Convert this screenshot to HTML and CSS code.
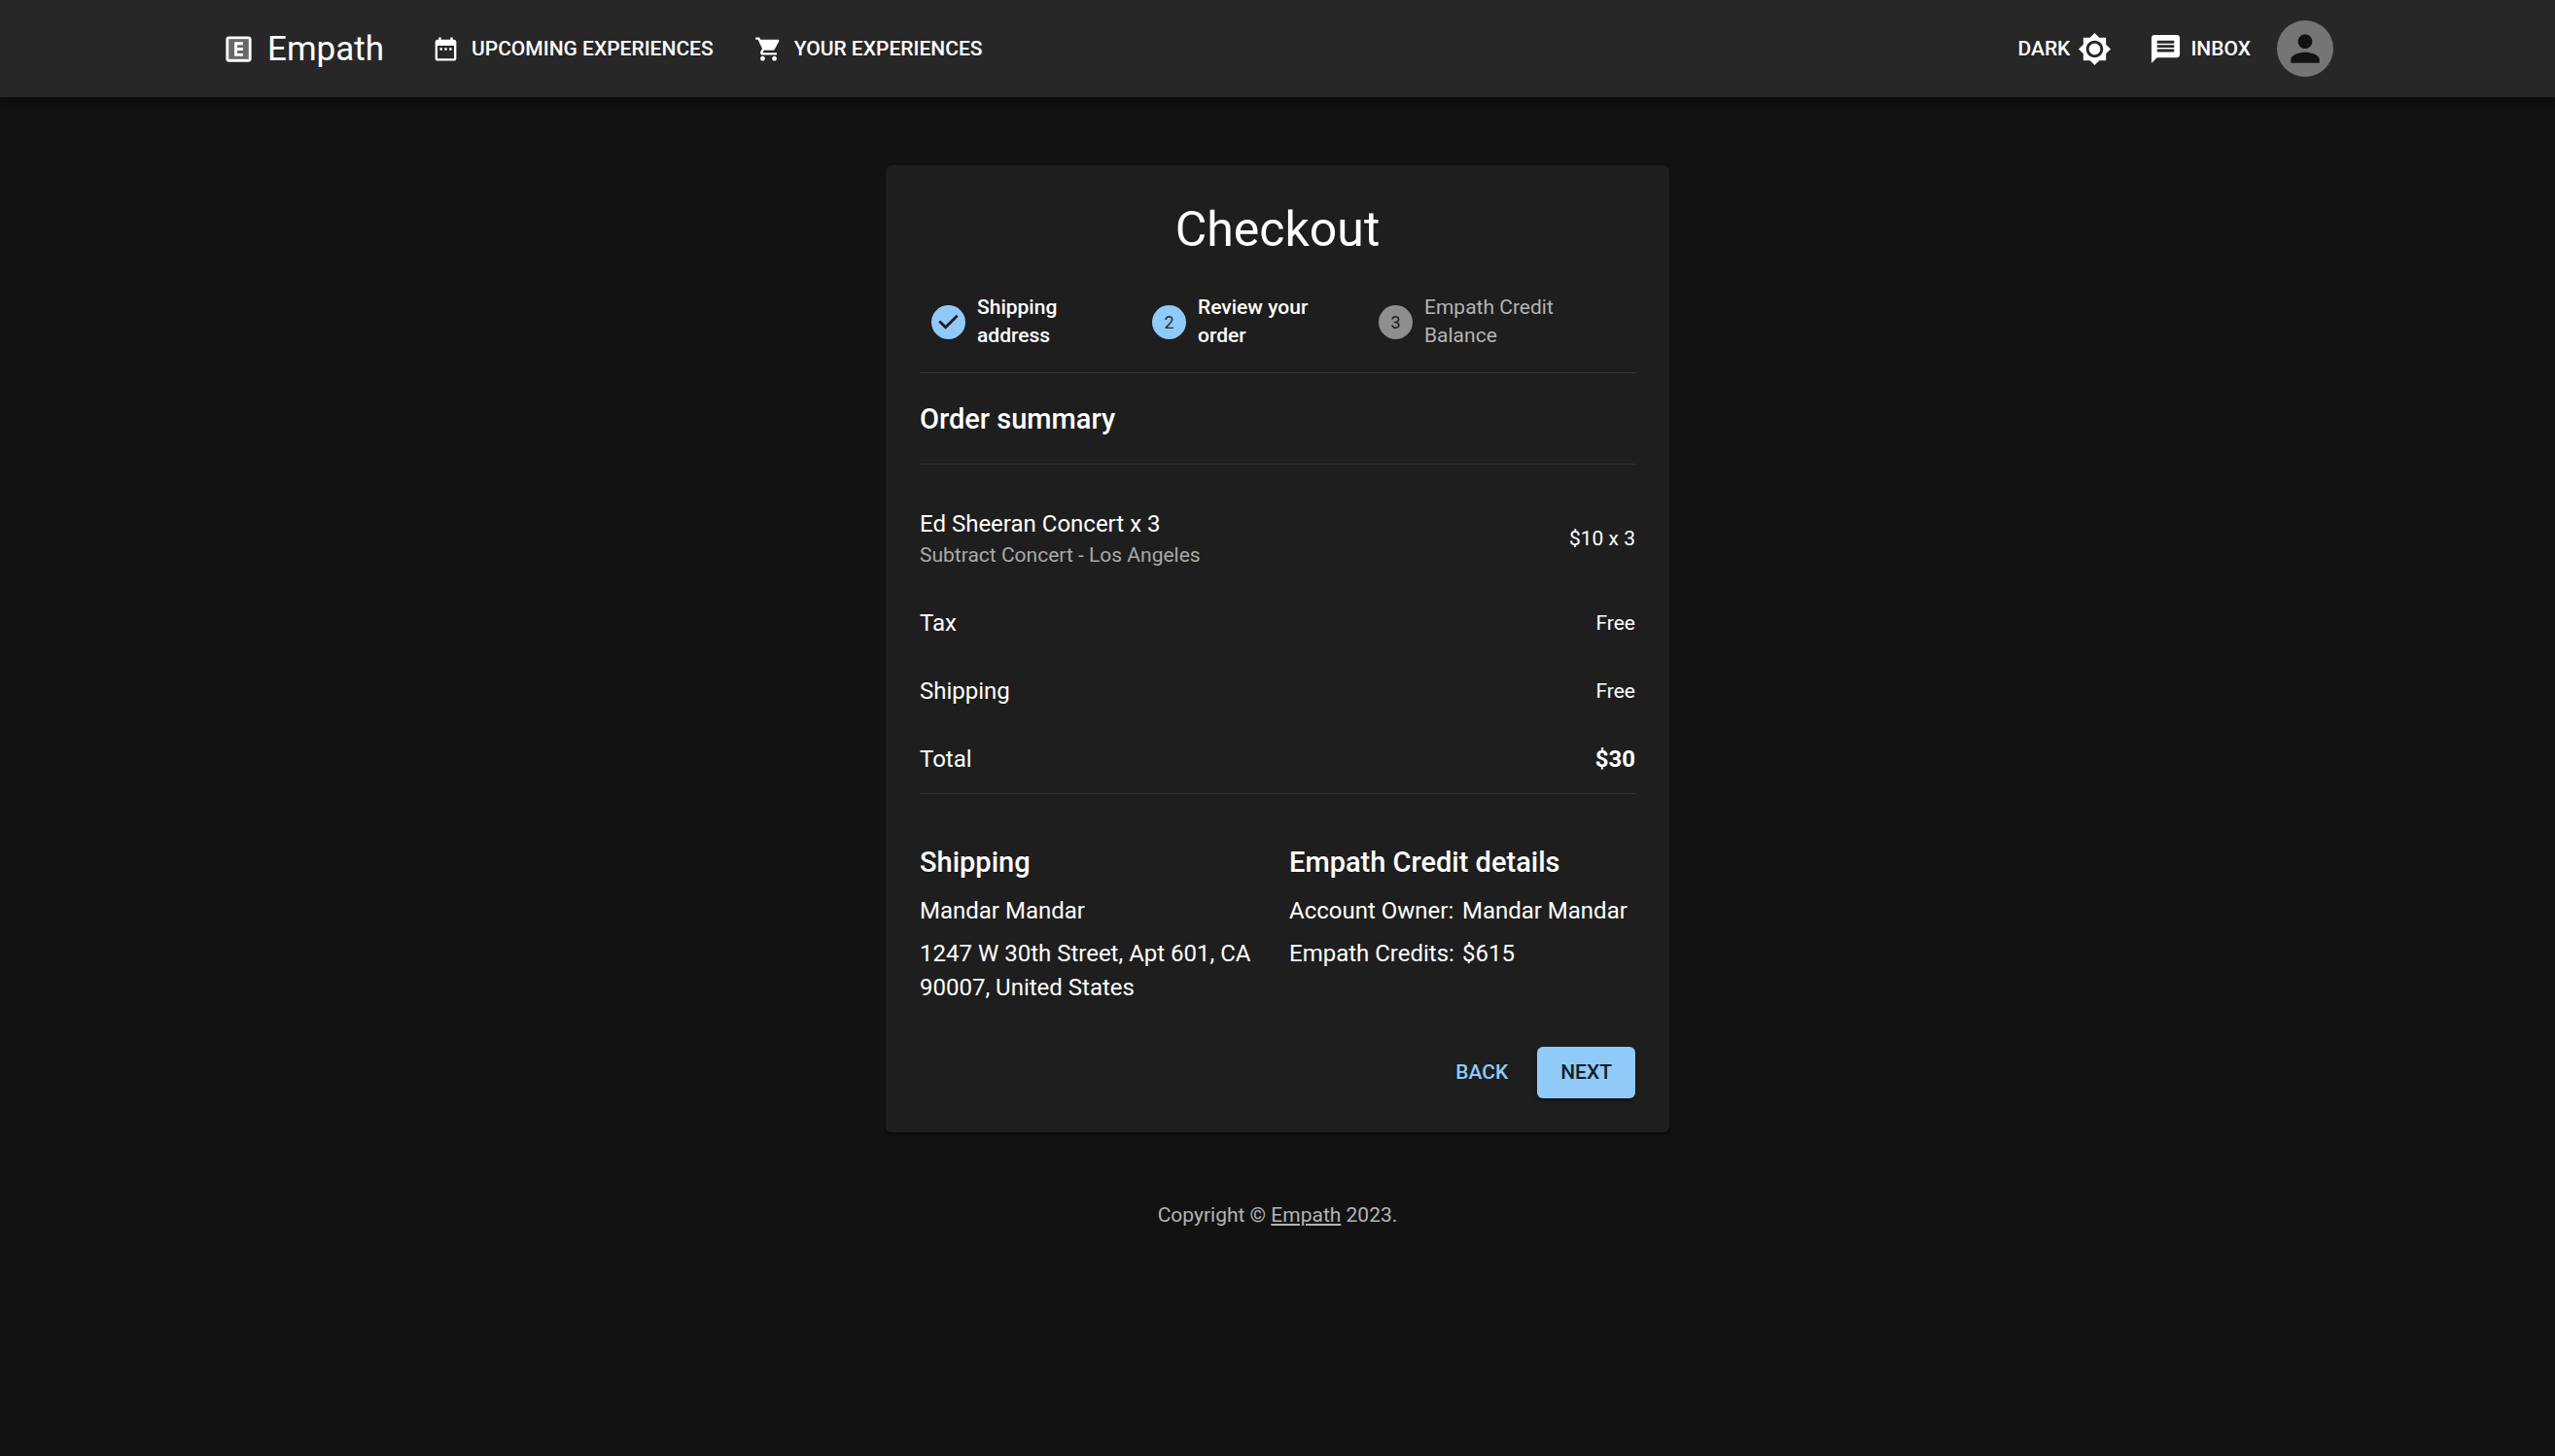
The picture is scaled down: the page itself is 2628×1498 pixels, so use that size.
FILE: index.html
```html
<!DOCTYPE html>
<html lang="en">
<head>
<meta charset="utf-8">
<meta name="viewport" content="width=device-width, initial-scale=1">
<title>Empath – Checkout</title>
<link rel="stylesheet" href="styles.css">
</head>
<body>
<header class="app-bar">
  <div class="toolbar">
    <a class="brand" href="#">
      <svg class="icon icon-lg" viewBox="0 0 24 24" aria-hidden="true"><path opacity=".3" d="M5 19h14V5H5v14z"/><path d="M15 7H9v10h6v-2h-4v-2h4v-2h-4V9h4z"/><path d="M19 3H5c-1.1 0-2 .9-2 2v14c0 1.100.9 2 2 2h14c1.100 0 2-.9 2-2V5c0-1.100-.9-2-2-2zm0 16H5V5h14v14z"/></svg>
      <span>Empath</span>
    </a>
    <nav class="nav">
      <a class="nav-link" href="#">
        <svg class="icon" viewBox="0 0 24 24" aria-hidden="true"><path d="M9 11H7v2h2v-2zm4 0h-2v2h2v-2zm4 0h-2v2h2v-2zm2-7h-1V2h-2v2H8V2H6v2H5c-1.110 0-1.990.9-1.990 2L3 20c0 1.100.89 2 2 2h14c1.100 0 2-.9 2-2V6c0-1.100-.9-2-2-2zm0 16H5V9h14v11z"/></svg>
        <span>UPCOMING EXPERIENCES</span>
      </a>
      <a class="nav-link" href="#">
        <svg class="icon" viewBox="0 0 24 24" aria-hidden="true"><path d="M7 18c-1.100 0-1.990.9-1.990 2S5.900 22 7 22s2-.9 2-2-.9-2-2-2zM1 2v2h2l3.600 7.590-1.350 2.450c-.16.28-.25.61-.25.96 0 1.100.9 2 2 2h12v-2H7.420c-.14 0-.25-.11-.25-.25l.03-.12.9-1.630h7.450c.75 0 1.410-.41 1.750-1.030l3.580-6.490c.08-.14.12-.31.12-.48 0-.55-.45-1-1-1H5.210l-.94-2H1zm16 16c-1.100 0-1.990.9-1.990 2s.89 2 1.990 2 2-.9 2-2-.9-2-2-2z"/></svg>
        <span>YOUR EXPERIENCES</span>
      </a>
    </nav>
    <div class="tools">
      <button class="tool" type="button">
        <span>DARK</span>
        <svg class="icon icon-lg" viewBox="0 0 24 24" aria-hidden="true"><path d="M20 8.690V4h-4.690L12 .69 8.690 4H4v4.690L.69 12 4 15.310V20h4.690L12 23.310 15.310 20H20v-4.690L23.310 12 20 8.690zM12 18c-3.310 0-6-2.690-6-6s2.690-6 6-6 6 2.690 6 6-2.690 6-6 6zm0-10c-2.210 0-4 1.790-4 4s1.790 4 4 4 4-1.790 4-4-1.790-4-4-4z"/></svg>
      </button>
      <a class="tool" href="#">
        <svg class="icon icon-lg" viewBox="0 0 24 24" aria-hidden="true"><path d="M20 2H4c-1.100 0-1.990.9-1.990 2L2 22l4-4h14c1.100 0 2-.9 2-2V4c0-1.100-.9-2-2-2zm-2 12H6v-2h12v2zm0-3H6V9h12v2zm0-3H6V6h12v2z"/></svg>
        <span>INBOX</span>
      </a>
      <button class="avatar" type="button" aria-label="Account">
        <svg class="avatar-icon" viewBox="0 0 24 24" aria-hidden="true"><path d="M12 12c2.210 0 4-1.790 4-4s-1.790-4-4-4-4 1.790-4 4 1.790 4 4 4zm0 2c-2.670 0-8 1.340-8 4v2h16v-2c0-2.660-5.330-4-8-4z"/></svg>
      </button>
    </div>
  </div>
</header>

<main class="container">
  <section class="card">
    <h1 class="title">Checkout</h1>

    <ol class="stepper">
      <li class="step">
        <svg class="step-icon" viewBox="0 0 24 24" aria-hidden="true"><path d="M12 0a12 12 0 1 0 0 24 12 12 0 0 0 0-24zm-2 17l-5-5 1.400-1.400 3.600 3.600 7.600-7.600L19 8l-9 9z"/></svg>
        <span class="step-label">Shipping address</span>
      </li>
      <li class="step" aria-current="step">
        <span class="step-number">2</span>
        <span class="step-label">Review your order</span>
      </li>
      <li class="step step-pending">
        <span class="step-number">3</span>
        <span class="step-label">Empath Credit Balance</span>
      </li>
    </ol>

    <h2 class="heading summary-heading">Order summary</h2>

    <ul class="lines">
      <li class="line line-product">
        <div>
          <div>Ed Sheeran Concert x 3</div>
          <div class="secondary">Subtract Concert - Los Angeles</div>
        </div>
        <span class="amount">$10 x 3</span>
      </li>
      <li class="line"><span>Tax</span><span class="amount">Free</span></li>
      <li class="line"><span>Shipping</span><span class="amount">Free</span></li>
      <li class="line"><span>Total</span><strong>$30</strong></li>
    </ul>

    <div class="details">
      <section>
        <h2 class="heading">Shipping</h2>
        <p class="detail">Mandar Mandar</p>
        <p class="detail">1247 W 30th Street, Apt 601, CA 90007, United States</p>
      </section>
      <section>
        <h2 class="heading">Empath Credit details</h2>
        <dl class="credit">
          <dt>Account Owner:</dt><dd>Mandar Mandar</dd>
          <dt>Empath Credits:</dt><dd>$615</dd>
        </dl>
      </section>
    </div>

    <div class="actions">
      <button class="btn" type="button">BACK</button>
      <button class="btn btn-primary" type="button">NEXT</button>
    </div>
  </section>

  <footer class="footer">Copyright © <a href="#">Empath</a> 2023.</footer>
</main>
</body>
</html>
```
FILE: styles.css
```css
* {
  box-sizing: border-box;
}

body {
  margin: 0;
  min-height: 100vh;
  background: #121212;
  color: #fff;
  font-family: Roboto, "Liberation Sans", sans-serif;
  font-size: 24px;
  line-height: 35px;
}

h1, h2, p, ul, ol, dl, dd {
  margin: 0;
  padding: 0;
}

ul, ol {
  list-style: none;
}

a {
  color: inherit;
}

button {
  border: 0;
  padding: 0;
  background: none;
  color: inherit;
  font: inherit;
  cursor: pointer;
}

/* App bar */
.app-bar {
  background: #272727;
  box-shadow: 0 3px 6px rgba(0, 0, 0, 0.2), 0 6px 8px rgba(0, 0, 0, 0.14), 0 1px 14px rgba(0, 0, 0, 0.12);
}

.toolbar {
  display: flex;
  align-items: center;
  max-width: 2242px;
  min-height: 100px;
  margin: 0 auto;
  padding: 0 35px;
}

.toolbar a {
  text-decoration: none;
}

.icon {
  flex: none;
  width: 29px;
  height: 29px;
  fill: currentColor;
}

.icon-lg {
  width: 35px;
  height: 35px;
}

.brand {
  display: flex;
  align-items: center;
  gap: 12px;
  margin-right: 49px;
  font-size: 35px;
  line-height: 47px;
}

.nav,
.tools {
  display: flex;
  align-items: center;
  gap: 38px;
}

.nav {
  gap: 42px;
}

.nav-link,
.tool {
  display: flex;
  align-items: center;
  gap: 12px;
  font-size: 21px;
  font-weight: 500;
}

.tool {
  gap: 8px;
}

.tools {
  margin-left: auto;
}

.avatar {
  display: grid;
  place-items: center;
  width: 58px;
  height: 58px;
  margin-left: -11px;
  border-radius: 50%;
  background: #757575;
  color: #121212;
}

.avatar-icon {
  width: 44px;
  height: 44px;
  fill: currentColor;
}

/* Checkout card */
.container {
  max-width: 876px;
  margin: 0 auto;
  padding: 70px 35px;
}

.card {
  padding: 35px;
  border-radius: 6px;
  background: #1e1e1e;
  box-shadow: 0 3px 2px -2px rgba(0, 0, 0, 0.2), 0 2px 2px rgba(0, 0, 0, 0.14), 0 2px 4px rgba(0, 0, 0, 0.12);
}

.title {
  font-size: 50px;
  font-weight: 400;
  line-height: 62px;
  text-align: center;
}

.stepper {
  display: grid;
  grid-template-columns: 227fr 233fr 276fr;
  padding: 35px 0 23px;
  border-bottom: 1px solid #343434;
}

.step {
  display: flex;
  align-items: center;
  gap: 12px;
  padding: 0 60px 0 12px;
  font-size: 21px;
  font-weight: 500;
  line-height: 29px;
}

.step-icon,
.step-number {
  flex: none;
  width: 35px;
  height: 35px;
}

.step-icon {
  fill: #90caf9;
}

.step-number {
  border-radius: 50%;
  background: #90caf9;
  color: #1e2a33;
  font-size: 18px;
  font-weight: 400;
  line-height: 35px;
  text-align: center;
}

.step-pending {
  color: #b4b4b4;
  font-weight: 400;
}

.step-pending .step-number {
  background: #8e8e8e;
  color: #1e1e1e;
}

.heading {
  font-size: 29px;
  font-weight: 500;
  line-height: 48px;
}

.summary-heading {
  padding: 23px 0 22px;
  border-bottom: 1px solid #2f2f2f;
}

.lines {
  display: flex;
  flex-direction: column;
  gap: 35px;
  padding: 44px 0 17px;
  border-bottom: 1px solid #343434;
}

.line {
  display: flex;
  align-items: center;
  justify-content: space-between;
}

.line-product {
  padding-bottom: 3px;
}

.secondary {
  color: #a9a9a9;
  font-size: 21px;
  line-height: 29px;
}

.amount {
  font-size: 21px;
}

.details {
  display: grid;
  grid-template-columns: 1fr 1fr;
  gap: 24px;
  padding: 46px 0 43px;
}

.detail {
  padding-top: 9px;
}

.credit {
  display: grid;
  grid-template-columns: max-content 1fr;
  gap: 9px 8px;
  padding-top: 9px;
  white-space: nowrap;
}

.actions {
  display: flex;
  justify-content: flex-end;
  gap: 12px;
}

.btn {
  padding: 9px 18px;
  border-radius: 6px;
  color: #90caf9;
  font-size: 21px;
  font-weight: 500;
}

.btn-primary {
  padding: 9px 24px;
  background: #90caf9;
  color: #0f1f2b;
  box-shadow: 0 4px 2px -3px rgba(0, 0, 0, 0.2), 0 3px 3px rgba(0, 0, 0, 0.14), 0 2px 7px rgba(0, 0, 0, 0.12);
}

.footer {
  padding-top: 71px;
  color: #b4b4b4;
  font-size: 21px;
  line-height: 29px;
  text-align: center;
}
```
